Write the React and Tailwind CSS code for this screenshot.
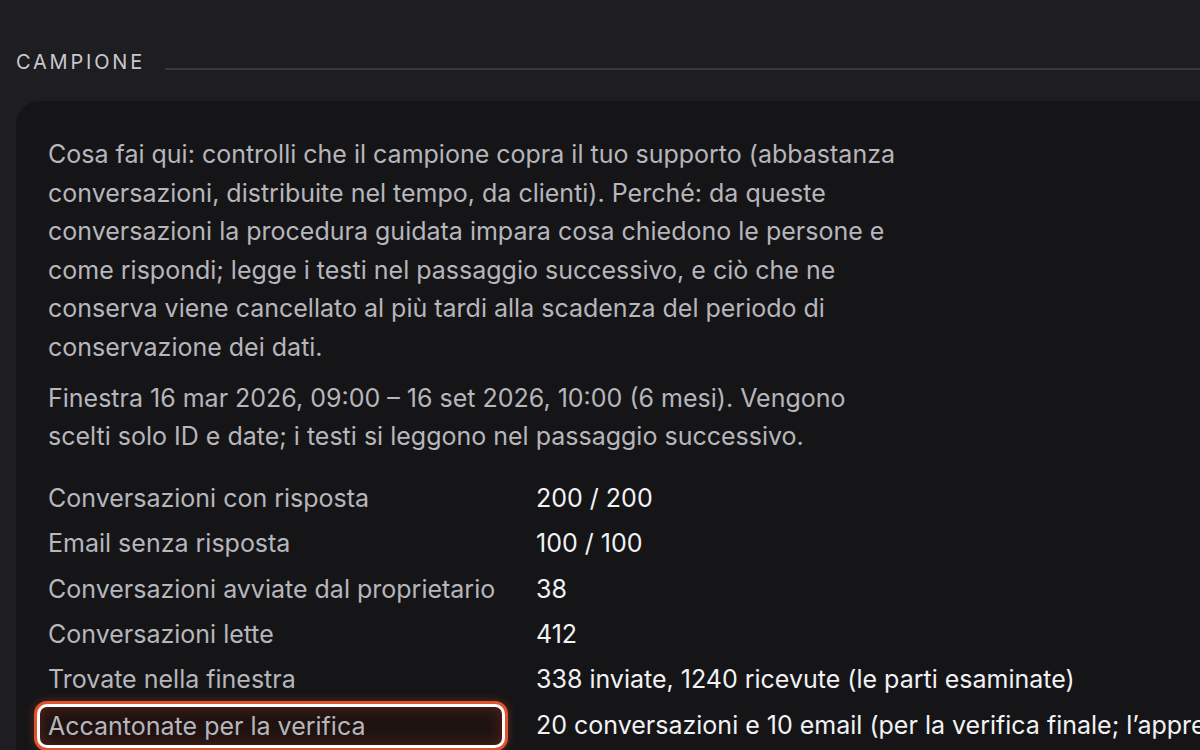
const rows = [
  ['Conversazioni con risposta', '200 / 200'],
  ['Email senza risposta', '100 / 100'],
  ['Conversazioni avviate dal proprietario', '38'],
  ['Conversazioni lette', '412'],
  ['Trovate nella finestra', '338 inviate, 1240 ricevute (le parti esaminate)'],
  ['Accantonate per la verifica', "20 conversazioni e 10 email (per la verifica finale; l’apprendimento non le usa)", true],
]

export default function App() {
  return (
    <div
      className="w-[1200px] h-[750px] overflow-hidden bg-[#1e1d22]"
      style={{ fontFamily: 'Inter, "Noto Sans", sans-serif' }}
    >
      <div className="w-[1500px] pl-4 pt-[50px]">
        <div className="flex items-center gap-5">
          <h2 className="text-[20px] leading-[24px] tracking-[0.14em] text-[#c9c8ce] font-normal">CAMPIONE</h2>
          <div className="flex-1 h-[2px] bg-[#39383e] mt-[14px]" />
        </div>

        <div className="mt-[27px] rounded-[24px] bg-[#151517] pl-8 pt-[34px] pb-10">
          <div className="max-w-[856px] text-[25px] leading-[38.6px] text-[#b7b6bc] space-y-3">
            <p>
              Cosa fai qui: controlli che il campione copra il tuo supporto (abbastanza conversazioni,
              distribuite nel tempo, da clienti). Perché: da queste conversazioni la procedura guidata
              impara cosa chiedono le persone e come rispondi; legge i testi nel passaggio successivo,
              e ciò che ne conserva viene cancellato al più tardi alla scadenza del periodo di
              conservazione dei dati.
            </p>
            <p>
              Finestra 16 mar 2026, 09:00 – 16 set 2026, 10:00 (6 mesi). Vengono scelti solo ID e
              date; i testi si leggono nel passaggio successivo.
            </p>
          </div>

          <div className="mt-[20px] grid grid-cols-[488px_1fr] text-[25px] leading-[45.4px]">
            {rows.map(([label, value, hl]) => (
              <div key={label} className="contents">
                {hl ? (
                  <div className="-ml-[11px] w-[468px] h-[44px] mt-[1px] pl-[8px] leading-[38px] rounded-[10px] border-[3px] border-white bg-[#1f1312] text-[#b7b6bc] shadow-[0_0_0_3px_#e0532f,0_0_8px_3px_rgba(224,83,47,0.35),inset_0_0_14px_rgba(200,70,40,0.35)] whitespace-nowrap">
                    {label}
                  </div>
                ) : (
                  <div className="text-[#b7b6bc] whitespace-nowrap">{label}</div>
                )}
                <div className="text-[#f2f2f4] whitespace-nowrap">{value}</div>
              </div>
            ))}
          </div>
        </div>
      </div>
    </div>
  )
}
